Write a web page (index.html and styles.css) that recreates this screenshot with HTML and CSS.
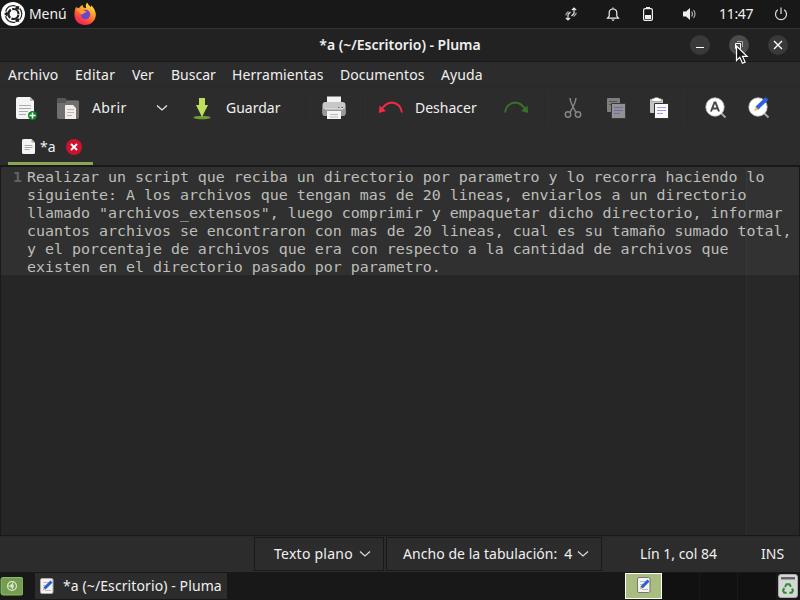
FILE: index.html
```html
<!DOCTYPE html>
<html lang="es">
<head>
<meta charset="utf-8">
<title>*a (~/Escritorio) - Pluma</title>
<link rel="stylesheet" href="styles.css">
</head>
<body>
<div class="desktop">
  <header class="panel">
    <svg class="logo" width="26" height="26" viewBox="0 0 26 26"><circle cx="13" cy="13" r="12" fill="#fff"/><g fill="none" stroke="#252525"><circle cx="13.500" cy="13" r="8.300" stroke-width="1.200" stroke-dasharray="12.500 4.880" stroke-dashoffset="-11.100"/><circle cx="13.500" cy="13" r="5" stroke-width="2.200" stroke-dasharray="9.200 1.270" stroke-dashoffset="-.6"/></g><g fill="#222"><path d="M4 13 7 10.500 8.500 13 7 15.500Z"/><path d="m15.200 8.500.5-3.500 3.500.2 0 3.300Z"/><path d="m15.200 17.500.5 3.500 3.500-.2 0-3.300Z"/></g></svg>
    <span class="menu-label">Menú</span>
    <svg class="firefox" width="24" height="24" viewBox="0 0 24 24"><defs><linearGradient id="fx" x1=".8" y1="0" x2=".25" y2="1"><stop offset="0" stop-color="#fff044"/><stop offset=".4" stop-color="#ff9c28"/><stop offset=".7" stop-color="#ff4c3b"/><stop offset="1" stop-color="#ef1868"/></linearGradient></defs><path d="M3 5Q4 6 6 6Q8 3 10 3Q9 5 12 6L13 6Q12 3 14 .5Q16 4 18 5.200Q18.500 3.800 18 3Q23 8 22.800 13.500C22 20 17 23 12 23C6 23 1.500 19 1.400 12.500Q1.300 8 3 5Z" fill="url(#fx)"/><circle cx="12.400" cy="12.500" r="4.800" fill="#6f45cc"/><path d="M3.500 8Q7 6 10 8Q11 9 13.500 9.300Q13 11 10.500 11.300Q9.500 12.500 8.500 12.500Q6 10 3.500 8Z" fill="#ff9f2c"/></svg>
    <div class="tray">
      <svg class="net" width="16" height="16" viewBox="0 0 16 16" fill="none" stroke="#eee" stroke-width="1.100"><path d="M7.500 6 5 8.500V14M2.800 11.800 5 14l2.200-2.200M8.500 10 11 7.500V2M8.800 4.200 11 2l2.200 2.200"/><path d="M3 9.500V8l2.500-2.500M13 6.500V8l-2.500 2.500" stroke="#aaa"/></svg>
      <svg class="bell" width="16" height="16" viewBox="0 0 16 16" fill="none" stroke="#eee" stroke-width="1.200"><path d="M2.500 12.200H13.500L11.800 10V7Q11.800 3 8 3T4.200 7V10ZM8 3V1.500"/><path d="M6.300 13.500H9.700L8 15.200Z" fill="#eee" stroke="none"/></svg>
      <svg class="battery" width="12" height="16" viewBox="0 0 12 16"><rect x="1.600" y="2.600" width="8.800" height="11.800" rx="1.500" fill="none" stroke="#eee" stroke-width="1.200"/><path d="M4 1h4v2H4zM3 9h6v4H3z" fill="#eee"/></svg>
      <svg class="volume" width="16" height="16" viewBox="0 0 16 16"><path d="M1 5.500h3L8 2v12L4 10.500H1Z" fill="#eee"/><path d="M9.500 5.500Q11.500 8 9.500 10.500M11.500 4Q14.500 8 11.500 12" fill="none" stroke="#aaa" stroke-width="1.200"/></svg>
      <span class="clock">11:47</span>
      <svg class="power" width="16" height="16" viewBox="0 0 16 16" fill="none" stroke="#ddd" stroke-width="1.200"><path d="M4.800 3.700A5.500 5.500 0 1 0 11.200 3.700M8 1.500V8"/></svg>
    </div>
  </header>

  <main class="window">
    <div class="titlebar">
      <span class="win-title">*a (~/Escritorio) - Pluma</span>
      <div class="win-buttons">
        <span class="win-btn"><svg width="20" height="20"><path d="M6 12.500h8" stroke="#fff"/></svg></span>
        <span class="win-btn win-btn-hover"><svg width="20" height="20" fill="none"><path d="M8 6.500h5.500V12" stroke="#aaa"/><path d="M6.500 8.500h5v5h-5z" stroke="#fff"/></svg></span>
        <span class="win-btn"><svg width="20" height="20"><path d="m6 6 8 8m0-8-8 8" stroke="#fff" stroke-width="1.300"/></svg></span>
      </div>
    </div>

    <nav class="menubar">
      <span class="m1">Archivo</span><span class="m2">Editar</span><span class="m3">Ver</span><span class="m4">Buscar</span><span class="m5">Herramientas</span><span class="m6">Documentos</span><span class="m7">Ayuda</span>
    </nav>

    <div class="toolbar">
      <div class="tool new"><svg width="24" height="24" viewBox="0 0 24 24"><path d="M3 1h12l4 4v16q0 2-2 2H3q-2 0-2-2V3q0-2 2-2Z" fill="#f4f4f4"/><path d="M15 1v4h4Z" fill="#bbb"/><path d="M4 9.500h12M4 12.500h12M4 15.500h9M4 18.500h7" stroke="#aaa"/><circle cx="17.500" cy="19.500" r="4.500" fill="#0b8425"/><path d="M14.500 19.500h6M17.500 16.500v6" stroke="#fff" stroke-width="1.500"/></svg></div>
      <div class="tool open"><svg width="24" height="24" viewBox="0 0 24 24"><path d="M1 3q0-1 1-1h7l2 2h10q2 0 2 2v15q0 2-2 2H3q-2 0-2-2Z" fill="#575757"/><path d="M1 7h8l2-2h12v16q0 2-2 2H3q-2 0-2-2Z" fill="#707070"/><path d="M10 9h7l3 3v11H9V10q0-1 1-1Z" fill="#f1eeea"/><path d="M11 13.500h7M11 16.500h7M11 19.500h5" stroke="#bcb5ae"/></svg><span>Abrir</span></div>
      <div class="tool drop"><svg width="12" height="8" viewBox="0 0 12 8"><path d="M1 1.500 6 6l5-4.500" fill="none" stroke="#e8e8e8" stroke-width="1.300"/></svg></div>
      <div class="tool save"><svg width="18" height="24" viewBox="0 0 18 24"><ellipse cx="9" cy="21.500" rx="8.500" ry="1.800" fill="#709b3a"/><path d="M6 2h6v7h3L9 21 3 9h3Z" fill="#bedf5c"/></svg><span>Guardar</span></div>
      <i class="sep"></i>
      <div class="tool print"><svg width="24" height="26" viewBox="0 0 24 26"><path d="M5 1.500h14v8H5z" fill="#f2f2f2"/><rect x=".5" y="7" width="23" height="14" rx="3" fill="#c7c7c7"/><path d="M.5 14h23v4q0 3-3 3h-17q-3 0-3-3Z" fill="#999"/><path d="M3 14h18" stroke="#e5e5e5"/><path d="M5 16h14v8H5z" fill="#f4f4f4"/><path d="M8 19.500h8M8 22h8" stroke="#bbb"/><path d="M16 12.500h1.500" stroke="#e33"/><path d="M19.500 12.500H21" stroke="#2a8b35"/></svg></div>
      <i class="sep sep-print"></i>
      <div class="tool undo"><svg width="26" height="16" viewBox="0 0 26 16"><path d="M3.500 9.500Q8 2.500 14 2.500Q22.500 3.500 24 12.500" fill="none" stroke="#f22b43" stroke-width="1.800"/><path d="m.8 13 .8-7.500L8 11Z" fill="#f22b43"/></svg><span>Deshacer</span></div>
      <div class="tool redo"><svg width="26" height="16" viewBox="0 0 26 16"><path d="M22.500 9.500Q18 2.500 12 2.500Q3.500 3.500 2 12.500" fill="none" stroke="#39702a" stroke-width="1.800"/><path d="m25.200 13-.8-7.500L18 11Z" fill="#39702a"/></svg></div>
      <i class="sep sep-redo"></i>
      <div class="tool cut"><svg width="18" height="22" viewBox="0 0 18 22" fill="none" stroke="#858585" stroke-width="1.500"><path d="M6 1Q6.500 6 12 15.500M12 1Q11.500 6 6 15.500"/><circle cx="4" cy="17.500" r="2.700"/><circle cx="14" cy="17.500" r="2.700"/></svg></div>
      <div class="tool copy"><svg width="20" height="22" viewBox="0 0 20 22"><rect x="1" y="1" width="13" height="14" rx="1" fill="#7e7e7e"/><path d="M3 4.500h8M3 7.500h3" stroke="#555"/><path d="M5.500 6.500h14v15h-14z" fill="#929292" stroke="#3a3a3a"/><path d="M8 10.500h9M8 13.500h9M8 16.500h6" stroke="#6c6ca8"/></svg></div>
      <div class="tool paste"><svg width="20" height="22" viewBox="0 0 20 22"><rect x="1" y="2" width="13" height="14" rx="1" fill="#c4c4c4"/><path d="M3 1.500h2L6 .5h3l1 1h2v3H3z" fill="#fff" stroke="#777" stroke-width=".5"/><path d="M5.500 6.500h14v15h-14z" fill="#fafafa" stroke="#333"/><path d="M8 10.500h9M8 13.500h9M8 16.500h6" stroke="#9c9ce6"/></svg></div>
      <i class="sep sep-find"></i>
      <div class="tool find"><svg width="22" height="22" viewBox="0 0 22 22"><path d="m15.500 15.500 5 5" stroke="#aaa49a" stroke-width="2"/><circle cx="10" cy="10" r="9.200" fill="#fff" stroke="#c6bfb6" stroke-width=".8"/><path d="M6 14.500 9.500 5.500h1L14 14.500M7.500 11.500h5" fill="none" stroke="#484848" stroke-width="2"/></svg></div>
      <div class="tool replace"><svg width="22" height="22" viewBox="0 0 22 22"><path d="m15.500 15.500 5 5" stroke="#aaa49a" stroke-width="2"/><circle cx="10" cy="10" r="9.200" fill="#fff" stroke="#c6bfb6" stroke-width=".8"/><path d="m6 14 1.800-4.500 3 2.900Z" fill="#efba66"/><path d="m9 11 10-9.500" stroke="#2c61de" stroke-width="4"/></svg></div>
    </div>

    <div class="tabs">
      <div class="tab">
        <svg width="13" height="15" viewBox="0 0 13 15"><path d="M1.500 0H9.500L13 3.500V13.500Q13 15 11.500 15h-10Q0 15 0 13.500v-12Q0 0 1.500 0Z" fill="#f4f4f4"/><path d="M9.500 0v3.500H13Z" fill="#aaa"/><path d="M2.500 6.500h8M2.500 8.500h8M2.500 10.500h5" stroke="#aaa"/></svg>
        <span>*a</span>
        <svg class="tab-close" width="16" height="16" viewBox="0 0 16 16"><circle cx="8" cy="8" r="8" fill="#cb1330"/><path d="m5 5 6 6m0-6-6 6" stroke="#fff" stroke-width="1.800"/></svg>
      </div>
    </div>

    <section class="editor">
      <div class="current-line"><span class="line-no">1</span><pre class="code">Realizar un script que reciba un directorio por parametro y lo recorra haciendo lo
siguiente: A los archivos que tengan mas de 20 lineas, enviarlos a un directorio
llamado "archivos_extensos", luego comprimir y empaquetar dicho directorio, informar
cuantos archivos se encontraron con mas de 20 lineas, cual es su tamaño sumado total,
y el porcentaje de archivos que era con respecto a la cantidad de archivos que
existen en el directorio pasado por parametro.</pre></div>
      <div class="margin-area"></div>
    </section>

    <footer class="status">
      <div class="status-btn lang"><span>Texto plano</span><svg width="12" height="8" viewBox="0 0 12 8"><path d="m1 1.500 5 4.500 5-4.500" fill="none" stroke="#ddd" stroke-width="1.200"/></svg></div>
      <div class="status-btn tabwidth"><span>Ancho de la tabulación:</span><b>4</b><svg width="12" height="8" viewBox="0 0 12 8"><path d="m1 1.500 5 4.500 5-4.500" fill="none" stroke="#ddd" stroke-width="1.200"/></svg></div>
      <span class="cursor-pos">Lín 1, col 84</span><span class="ins">INS</span>
    </footer>
  </main>

  <div class="taskbar">
    <svg class="show" width="23" height="20" viewBox="0 0 23 20"><rect x="1" y="1.500" width="22" height="17.500" rx="2" fill="#759d50" stroke="#91b96c"/><circle cx="12" cy="10" r="4.400" fill="none" stroke="#dce9d0" stroke-width="1.200"/><circle cx="12" cy="10" r="1.900" fill="#dce8d2"/><path d="M8 10h2m3-3.400-1 2m1 4.800-1-2" stroke="#dce9d0"/></svg>
    <div class="task"><svg width="14" height="16" viewBox="0 0 14 16"><rect x=".5" y=".5" width="12.500" height="15" rx="1.500" fill="#f4f4f4" stroke="#aaa"/><path d="M3 4.500h6M3 7.500h5M5 12.500h6" stroke="#bbb"/><path d="m4.500 10.500 7-7" stroke="#285ddd" stroke-width="3"/><path d="m2.500 12.500.8-2.500 1.700 1.700Z" fill="#efab4c"/></svg><span>*a (~/Escritorio) - Pluma</span></div>
    <div class="pager">
      <span class="desk active"><svg width="14" height="16" viewBox="0 0 14 16"><rect x=".5" y=".5" width="12.500" height="15" rx="1.500" fill="#f4f4f4" stroke="#777"/><path d="M3 4.500h6M3 7.500h5M5 12.500h6" stroke="#bbb"/><path d="m4.500 10.500 7-7" stroke="#285ddd" stroke-width="3"/><path d="m2.500 12.500.8-2.500 1.700 1.700Z" fill="#efab4c"/></svg></span><span class="desk"></span><span class="desk"></span><span class="desk"></span>
    </div>
    <svg class="trash" width="20" height="24" viewBox="0 0 20 24"><rect x=".5" y=".5" width="19" height="23" rx="2.500" fill="#d7d7d7" stroke="#aaa"/><path d="M3 3h14v2.500H3z" fill="#666"/><g fill="none" stroke="#25932c" stroke-width="2"><path d="m7 13 1.500-2.700h3l1.400 2.500M14 14.500l1 2-1.200 2.200h-2.500M8.800 18.700H6.200L5 16.500 6.300 14"/></g></svg>
  </div>
  <svg class="pointer" width="14" height="20" viewBox="0 0 14 20"><path d="M1.500 1v14.500l3.300-3.200 2.600 6 2.700-1.200-2.600-5.800h4.600Z" fill="#161616" stroke="#fff" stroke-width="1.200"/></svg>
</div>
</body>
</html>
```

FILE: styles.css
```css
* { box-sizing: border-box; }
body { margin: 0; background: #181818; color: #f0f0f0; font: 14px/20px "Noto Sans", sans-serif; overflow: hidden; }
svg { display: block; flex: none; }
span { white-space: nowrap; }
.desktop { position: relative; width: 800px; height: 600px; display: flex; flex-direction: column; }
.panel { height: 29px; display: flex; align-items: center; background: #181818; border-bottom: 1px solid #333; flex: none; }
.menu-label { width: 44px; margin-left: 3px; letter-spacing: -.1px; }
.tray { margin-left: auto; display: flex; align-items: center; padding-right: 11px; }
.bell { margin-left: 26px; }
.battery { margin-left: 21px; }
.volume { margin-left: 28px; }
.clock { width: 34px; margin-left: 21px; letter-spacing: -.3px; }
.power { margin-left: 20px; }
.window { height: 543px; display: flex; flex-direction: column; background: #2c2c2c; flex: none; }
.titlebar { height: 33px; display: grid; grid-template-columns: 1fr 98px 12px; align-items: center; background: #222; border-bottom: 1px solid #191919; flex: none; }
.win-title { padding-left: 110px; text-align: center; font-weight: 600; letter-spacing: -.02px; }
.win-buttons { display: flex; justify-content: space-between; }
.win-btn { width: 20px; height: 20px; border-radius: 50%; background: #393939; }
.win-btn-hover { background: #4b4b4b; }
.menubar { height: 25px; display: flex; align-items: center; padding: 1px 0 0 8px; border-bottom: 1px solid #282828; flex: none; }
.m1 { width: 67px; letter-spacing: .2px; } .m2 { width: 57px; letter-spacing: .25px; } .m3 { width: 39px; } .m4 { width: 61px; }
.m5 { width: 108px; letter-spacing: .1px; } .m6 { width: 101px; letter-spacing: .05px; } .m7 { letter-spacing: .1px; }
.toolbar { height: 42px; display: flex; align-items: center; padding-left: 15px; flex: none; }
.tool { display: flex; align-items: center; flex: none; }
.new { width: 41px; }
.open { width: 100px; gap: 12px; }
.open span { letter-spacing: .4px; }
.drop { width: 37px; }
.save { width: 112px; gap: 15px; }
.sep { width: 1px; height: 34px; background: #292929; margin-right: 16px; flex: none; }
.print { width: 40px; }
.sep-print { margin-right: 15px; }
.undo { width: 125px; gap: 11px; }
.redo { width: 41px; }
.sep-redo { margin-right: 19px; }
.cut { width: 42px; }
.copy { width: 43px; }
.paste { width: 38px; }
.sep-find { margin-right: 17px; }
.find { width: 43px; }
.tabs { height: 37px; padding-left: 8px; border-bottom: 1px solid #181818; flex: none; }
.tab { width: 85px; height: 36px; display: flex; align-items: center; padding-left: 14px; border-bottom: 3px solid #8aa652; }
.tab svg, .tab span { position: relative; top: 1px; }
.tab span { width: 26px; margin-left: 5px; }
.editor { flex: 1; min-height: 0; display: grid; grid-template-columns: 745px 1fr; background: #262626; border: 1px solid #191919; }
.current-line { grid-area: 1 / 1 / 2 / 3; height: 108px; display: flex; background: #303030; font: 14.95px/18px "DejaVu Sans Mono", monospace; color: #bdbeb9; padding-top: 1px; }
.line-no { width: 26px; padding-left: 12px; color: #626268; font-weight: 700; }
.code { margin: 0; font: inherit; }
.margin-area { grid-area: 1 / 2; border-left: 1px solid rgba(255,255,255,.035); background: rgba(255,255,255,.012); }
.status { height: 36px; display: flex; align-items: center; padding: 0 0 1px 254px; border-top: 1px solid #292929; flex: none; }
.status-btn { height: 34px; display: flex; align-items: center; border: 1px solid #191919; }
.lang { width: 130px; padding-left: 19px; gap: 6px; }
.lang span { letter-spacing: .25px; }
.tabwidth { width: 216px; margin-left: 2px; padding-left: 16px; }
.tabwidth span { letter-spacing: .05px; }
.tabwidth b { font-weight: 400; margin-left: 7px; }
.tabwidth svg { margin-left: 5px; }
.cursor-pos { width: 121px; margin-left: 38px; }
.taskbar { height: 28px; display: flex; align-items: center; background: #181818; }
.task { width: 192px; height: 26px; display: flex; align-items: center; gap: 9px; background: #2c2c2c; margin-left: 12px; padding-left: 5px; letter-spacing: .1px; }
.pager { display: flex; height: 27px; margin-left: 398px; }
.desk { width: 38px; height: 27px; background: #111; border-right: 1px solid #191919; }
.desk.active { display: grid; justify-content: center; padding-top: 3px; background: #aabd81; border: 1px solid #fff; width: 37px; height: 26px; }
.desk:last-child { width: 39px; }
.trash { margin-left: 1px; }
.pointer { position: absolute; left: 735px; top: 45px; }
```
